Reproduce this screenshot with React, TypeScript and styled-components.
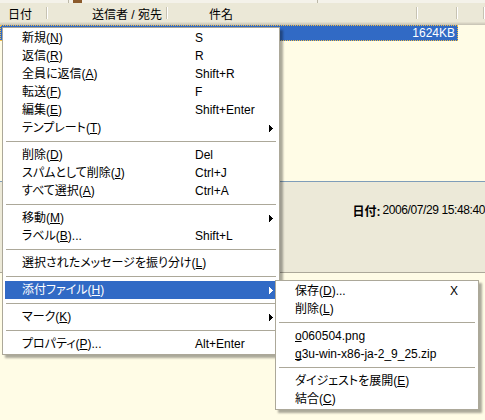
import React from 'react'
import styled, { createGlobalStyle } from 'styled-components'

const GlobalStyle = createGlobalStyle`
  html, body {
    margin: 0;
    padding: 0;
  }
  body {
    width: 485px;
    height: 420px;
    overflow: hidden;
  }
`

const Screen = styled.div`
  position: relative;
  width: 485px;
  height: 420px;
  overflow: hidden;
  display: flex;
  flex-direction: column;
  background: #fffce6;
  font-family: 'Liberation Sans', 'Noto Sans CJK JP', sans-serif;
  font-size: 12px;
  font-feature-settings: 'palt';
  color: #000;
`

const TopStrip = styled.div`
  height: 3px;
  flex: none;
  display: flex;
  background: #f4f2ea;
`

const StripDivider = styled.div<{ $gap: number }>`
  width: 1px;
  margin-left: ${(p) => p.$gap}px;
  background: #bcb8a8;
`

const StripIcon = styled.div`
  width: 9px;
  margin-left: 4px;
  background: #8b5a2b;
`

const ListHeader = styled.div`
  height: 22px;
  flex: none;
  box-sizing: border-box;
  display: flex;
  background: #ebe8d7;
  border-bottom: 1px solid #cbc7b8;
  box-shadow: inset 0 -1px #d6d2c2, inset 0 -2px #e2decd;
`

const HeaderCell = styled.div<{ $w?: number; $align?: string; $pad?: string }>`
  position: relative;
  flex: ${(p) => (p.$w ? `0 0 ${p.$w}px` : '1')};
  box-sizing: border-box;
  display: flex;
  align-items: center;
  justify-content: ${(p) => p.$align || 'flex-start'};
  padding: ${(p) => p.$pad || '0'};
  white-space: nowrap;
  &::after {
    content: '';
    position: absolute;
    right: 1px;
    top: 4px;
    bottom: 5px;
    width: 1px;
    background: #c7c3b3;
    box-shadow: 1px 0 #fff;
  }
`

const MessageList = styled.div`
  height: 156px;
  flex: none;
  background: #fffce6;
  border-bottom: 1px solid #7f9db9;
`

const SelectedRow = styled.div`
  width: 458px;
  height: 16px;
  box-sizing: border-box;
  display: flex;
  align-items: center;
  justify-content: flex-end;
  padding-right: 2px;
  background: #316ac5;
  border: 1px dotted #f2be45;
  color: #fff;
`

const PreviewHeader = styled.div`
  height: 91px;
  flex: none;
  box-sizing: border-box;
  background: #ece9d8;
  border-bottom: 1px solid #aca899;
  padding-top: 20px;
`

const FieldRow = styled.div`
  height: 16px;
  display: flex;
  align-items: center;
  justify-content: flex-end;
  white-space: nowrap;
`

const FieldLabel = styled.span`
  font-weight: bold;
  margin-right: 2px;
`

const FieldValue = styled.span`
  letter-spacing: -0.4px;
`

const PreviewBody = styled.div`
  flex: 1;
  background: #fffce6;
`

const Menu = styled.div<{ $left: number; $top: number; $width: number }>`
  position: absolute;
  left: ${(p) => p.$left}px;
  top: ${(p) => p.$top}px;
  width: ${(p) => p.$width}px;
  box-sizing: border-box;
  background: #fff;
  border: 1px solid #aca899;
  padding: 1px 2px;
  box-shadow: 3px 3px 2px rgba(0, 0, 0, 0.33);
`

const Item = styled.div<{ $label: number; $active?: boolean }>`
  display: grid;
  grid-template-columns: ${(p) => p.$label}px 1fr 8px;
  align-items: center;
  height: 18px;
  line-height: 18px;
  padding: 0 4px 0 17px;
  white-space: nowrap;
  background: ${(p) => (p.$active ? '#316ac5' : 'transparent')};
  color: ${(p) => (p.$active ? '#fff' : '#000')};
`

const Key = styled.span`
  text-decoration: underline;
  text-underline-offset: 1px;
  text-decoration-skip-ink: none;
`

const Arrow = styled.svg`
  justify-self: end;
  display: block;
`

const Separator = styled.div`
  height: 1px;
  margin: 4px 1px;
  background: #aca899;
`

type Entry =
  | 'sep'
  | {
      text: React.ReactNode
      shortcut?: string
      sub?: boolean
      active?: boolean
    }

const mn = (label: string, key: string, suffix = '') => (
  <>
    {label}(<Key>{key}</Key>){suffix}
  </>
)

const mainItems: Entry[] = [
  { text: mn('新規', 'N'), shortcut: 'S' },
  { text: mn('返信', 'R'), shortcut: 'R' },
  { text: mn('全員に返信', 'A'), shortcut: 'Shift+R' },
  { text: mn('転送', 'F'), shortcut: 'F' },
  { text: mn('編集', 'E'), shortcut: 'Shift+Enter' },
  { text: mn('テンプレート', 'T'), sub: true },
  'sep',
  { text: mn('削除', 'D'), shortcut: 'Del' },
  { text: mn('スパムとして削除', 'J'), shortcut: 'Ctrl+J' },
  { text: mn('すべて選択', 'A'), shortcut: 'Ctrl+A' },
  'sep',
  { text: mn('移動', 'M'), sub: true },
  { text: mn('ラベル', 'B', '...'), shortcut: 'Shift+L' },
  'sep',
  { text: mn('選択されたメッセージを振り分け', 'L') },
  'sep',
  { text: mn('添付ファイル', 'H'), sub: true, active: true },
  'sep',
  { text: mn('マーク', 'K'), sub: true },
  'sep',
  { text: mn('プロパティ', 'P', '...'), shortcut: 'Alt+Enter' },
]

const attachItems: Entry[] = [
  { text: mn('保存', 'D', '...'), shortcut: 'X' },
  { text: mn('削除', 'L') },
  'sep',
  {
    text: (
      <>
        <Key>o</Key>060504.png
      </>
    ),
  },
  {
    text: (
      <>
        <Key>g</Key>3u-win-x86-ja-2_9_25.zip
      </>
    ),
  },
  'sep',
  { text: mn('ダイジェストを展開', 'E') },
  { text: mn('結合', 'C') },
]

const SubArrow = () => (
  <Arrow width="4" height="7" viewBox="0 0 4 7" shapeRendering="crispEdges">
    <rect x="0" y="0" width="1" height="7" fill="currentColor" />
    <rect x="1" y="1" width="1" height="5" fill="currentColor" />
    <rect x="2" y="2" width="1" height="3" fill="currentColor" />
    <rect x="3" y="3" width="1" height="1" fill="currentColor" />
  </Arrow>
)

const MenuList = ({ items, label }: { items: Entry[]; label: number }) => (
  <>
    {items.map((it, i) =>
      it === 'sep' ? (
        <Separator key={i} />
      ) : (
        <Item key={i} $label={label} $active={it.active}>
          <span>{it.text}</span>
          <span>{it.shortcut}</span>
          {it.sub ? <SubArrow /> : <span />}
        </Item>
      )
    )}
  </>
)

export default function App() {
  return (
    <>
      <GlobalStyle />
      <Screen>
        <TopStrip>
          <StripDivider $gap={68} />
          <StripIcon />
          <StripDivider $gap={235} />
        </TopStrip>
        <ListHeader>
          <HeaderCell $w={48} $pad="0 0 0 8px">
            日付
          </HeaderCell>
          <HeaderCell $w={120} $align="flex-end" $pad="0 6px 0 0">
            送信者 / 宛先
          </HeaderCell>
          <HeaderCell $w={250} $pad="0 0 0 41px">
            件名
          </HeaderCell>
          <HeaderCell $w={40} />
          <HeaderCell />
        </ListHeader>
        <MessageList>
          <SelectedRow>1624KB</SelectedRow>
        </MessageList>
        <PreviewHeader>
          <FieldRow>
            <FieldLabel>日付:</FieldLabel>
            <FieldValue>2006/07/29 15:48:40</FieldValue>
          </FieldRow>
        </PreviewHeader>
        <PreviewBody />

        <Menu $left={2} $top={27} $width={278}>
          <MenuList items={mainItems} label={173} />
        </Menu>
        <Menu $left={275} $top={280} $width={204}>
          <MenuList items={attachItems} label={155} />
        </Menu>
      </Screen>
    </>
  )
}
